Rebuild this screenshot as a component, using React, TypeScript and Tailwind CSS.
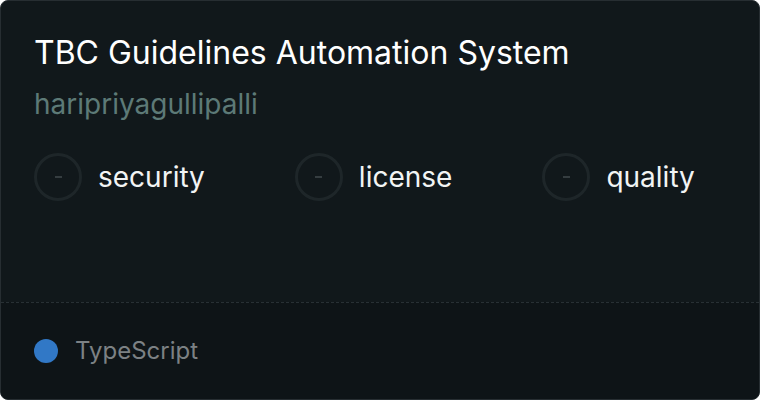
import React from "react";

function Check({ label }: { label: string }) {
  return (
    <div className="flex items-center gap-[16px]">
      <div className="w-[48px] h-[48px] rounded-full border-[3px] border-[#1e2629] flex items-center justify-center">
        <div className="w-[7px] h-[2px] bg-[#353d40]" />
      </div>
      <span className="text-[28px] text-[#f2f4f4] leading-none">{label}</span>
    </div>
  );
}

export default function App() {
  return (
    <div className="w-[760px] h-[400px] bg-white" style={{ fontFamily: "Inter, 'Noto Sans', sans-serif" }}>
      <div className="w-[760px] h-[400px] rounded-[8px] border border-[#272e32] bg-[#11181b] flex flex-col overflow-hidden">
        <div className="flex-1 px-[33px] pt-[34px]">
          <div className="text-[32px] leading-[36px] text-white">TBC Guidelines Automation System</div>
          <div className="mt-[17px] text-[28px] leading-[32px] text-[#5d7a77]">haripriyagullipalli</div>
          <div className="mt-[33px] flex items-center gap-[90px]">
            <Check label="security" />
            <Check label="license" />
            <Check label="quality" />
          </div>
        </div>
        <div className="h-[97px] border-t border-dashed border-[#283034] bg-[#0e1417] flex items-center px-[33px] gap-[17px]">
          <div className="w-[24px] h-[24px] rounded-full bg-[#3178c6]" />
          <span className="text-[24px] text-[#7c8184]">TypeScript</span>
        </div>
      </div>
    </div>
  );
}
